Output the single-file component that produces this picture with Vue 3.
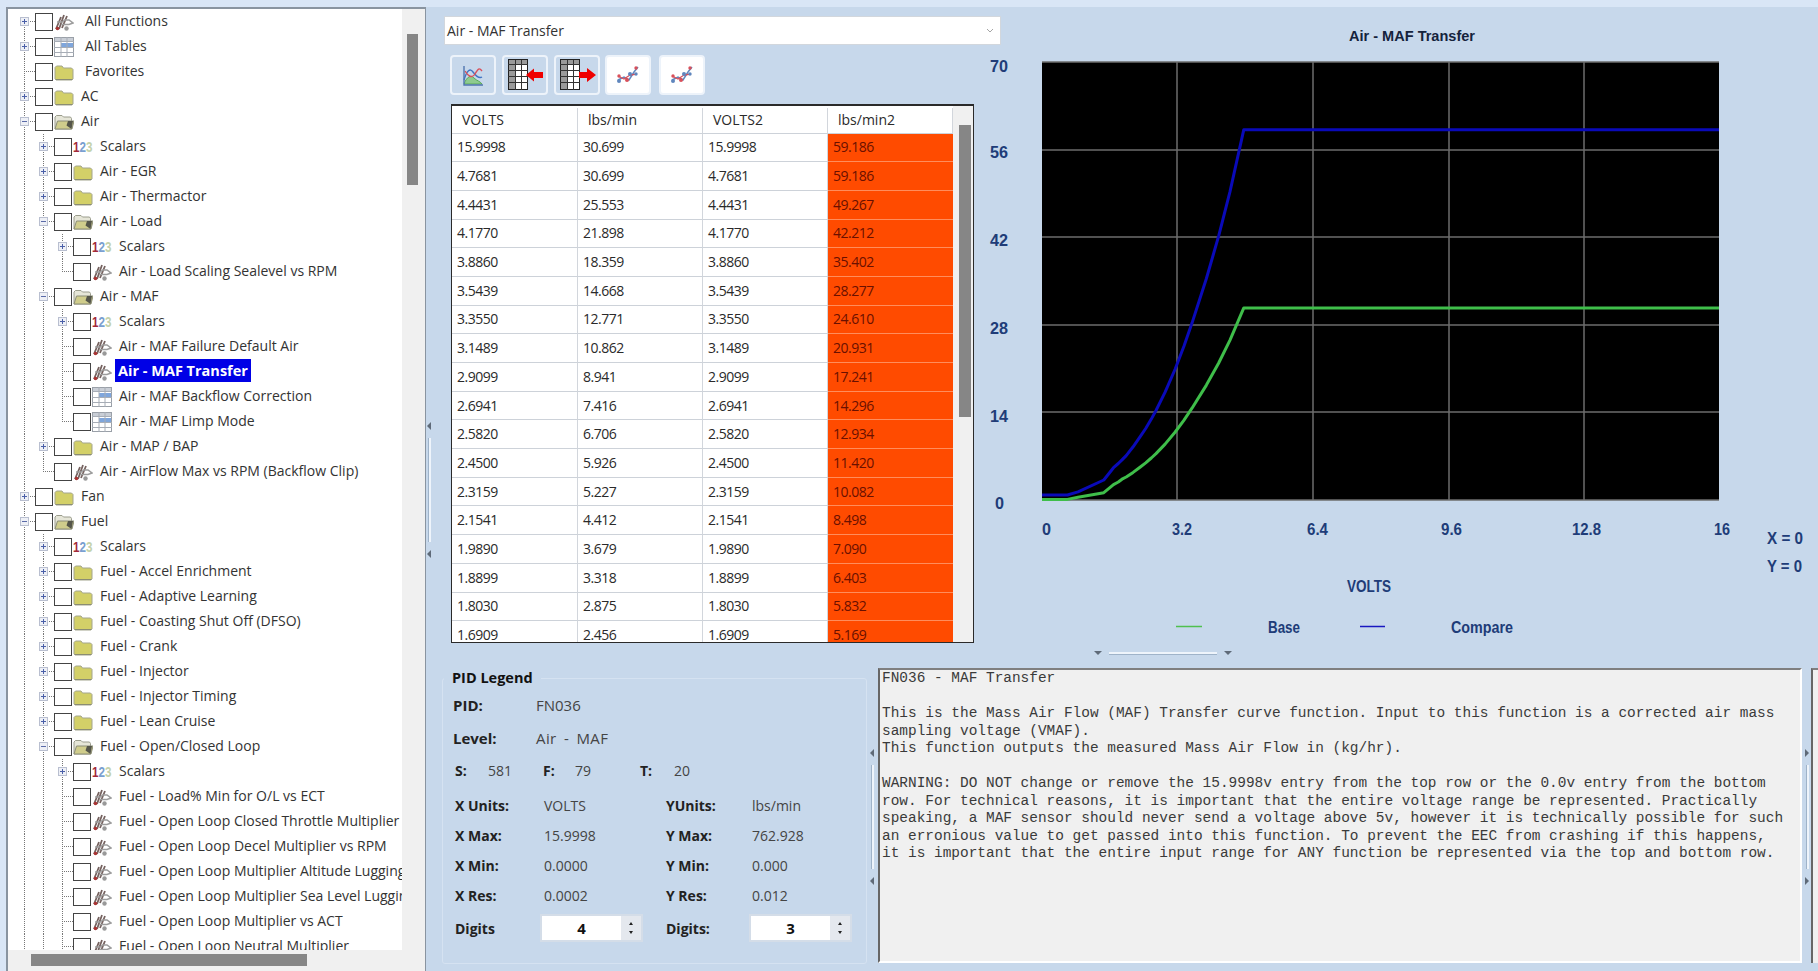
<template>
  <div class="app">
    <aside class="tree">
      <div class="tree-rows">
        <div v-for="row in treeRows" :key="row.id" class="tree-row">
          <span v-for="g in row.guides" :key="g.k" class="guide" :class="{ on: g.on }"></span>
          <span class="exp" :class="{ first: row.id === 0, down: row.down }">
            <span v-if="row.state" class="exp-box" :class="{ plus: row.state === '+' }"></span>
          </span>
          <span class="check"></span>
          <span class="ico">
            <svg v-if="row.icon === 'fn'" width="20" height="20" viewBox="0 0 20 20" fill="none">
              <path d="M2 17 7 5M5 17 10 3M8 16 13 4" stroke="#75625f" stroke-width="1.800" />
              <path d="M3 10h5l3-2h4l4 3-4 1.500H7" stroke="#9d9d9d" stroke-width="1.500" />
              <circle cx="3.500" cy="16.500" r="1.800" fill="#a33" />
              <circle cx="12.500" cy="16.500" r="2.200" fill="#999" />
            </svg>
            <svg v-else-if="row.icon === 'table'" width="20" height="20" viewBox="0 0 20 20">
              <rect x="0.500" y="0.500" width="19" height="19" fill="#fff" stroke="#9aa0a8" />
              <rect x="1" y="1" width="18" height="3" fill="#c9ced6" />
              <rect x="7" y="6" width="12" height="4" fill="#7fa6dc" />
              <path d="M0 4.500h20M0 10.500h20M0 15.500h20M7 0v20M13 0v20" stroke="#a7adb6" fill="none" />
            </svg>
            <svg v-else-if="row.icon === 'folder'" width="20" height="20" viewBox="0 0 20 20">
              <path d="M1 17V5.500L2.500 4H8l1.500 2h8L19 7.500V17l-1 1H2z" fill="#d3d068" stroke="#a3a58e" />
              <path d="M2 17.500h16" stroke="#8b8d74" />
            </svg>
            <svg v-else-if="row.icon === 'open'" width="20" height="20" viewBox="0 0 20 20">
              <path d="M1 17V5l1.500-1.500H8L9.500 5h7l1 1.500V17z" fill="#e6e6d8" stroke="#9a9c8c" />
              <path d="M1 17 3.500 9H20l-2 8z" fill="#d0cd8c" stroke="#8c8e78" />
              <path d="M14 9h5l-1.500 8-5-3.500z" fill="#55564a" />
            </svg>
            <span v-else class="nums"><b class="n1">1</b><b class="n2">2</b><b class="n3">3</b></span>
          </span>
          <span class="tree-label" :class="{ wide: row.id < 3, sel: row.label === 'Air - MAF Transfer' }">{{ row.label }}</span>
        </div>
      </div>
      <div class="tree-vbar"><div class="tree-vthumb"></div></div>
      <div class="tree-hbar"><div class="tree-hthumb"></div></div>
    </aside>

    <main class="main">
      <section class="top">
        <div class="left-col">
          <div class="combo">
            <span>Air - MAF Transfer</span>
            <svg width="8" height="6" viewBox="0 0 8 6"><path d="M1 1l3 3 3-3" fill="none" stroke="#a5a5a5" /></svg>
          </div>
          <div class="toolbar">
            <button class="tool on">
              <svg width="24" height="24" viewBox="0 0 24 24" fill="none">
                <path d="M3 21c3-8 7-9 10-6s6 3 8 6z" fill="#8ecb8e" stroke="#5aa85a" />
                <path d="M3 17c3-10 6-12 9-8s6 7 9 5" stroke="#3f74c4" stroke-width="1.400" />
                <path d="M4 8c3 5 7 8 10 3s4-7 7-3" stroke="#d9505a" stroke-width="1.400" />
                <path d="M3 3v19h19" stroke="#5076b0" stroke-width="1.400" />
              </svg>
            </button>
            <button class="tool on">
              <svg width="40" height="34" viewBox="0 0 40 34">
                <rect x="3.500" y="1.500" width="19" height="30" fill="#fff" stroke="#222" />
                <rect x="4" y="2" width="18" height="4" fill="#9a9a9a" />
                <rect x="4" y="6" width="6" height="25" fill="#9a9a9a" />
                <path d="M3 6.500h20M3 12.500h20M3 18.500h20M3 24.500h20M10.500 2v30M16.500 2v30" stroke="#333" fill="none" />
                <path d="M21 17l8-6.500V14h9v6h-9v3.500z" fill="#ef0000" />
              </svg>
            </button>
            <button class="tool on">
              <svg width="40" height="34" viewBox="0 0 40 34">
                <rect x="3.500" y="1.500" width="19" height="30" fill="#fff" stroke="#222" />
                <rect x="4" y="2" width="18" height="4" fill="#9a9a9a" />
                <rect x="4" y="6" width="6" height="25" fill="#9a9a9a" />
                <path d="M3 6.500h20M3 12.500h20M3 18.500h20M3 24.500h20M10.500 2v30M16.500 2v30" stroke="#333" fill="none" />
                <path d="M39 17l-9-7v4H22v6h8v4z" fill="#ef0000" />
              </svg>
            </button>
            <button v-for="n in 2" :key="n" class="tool">
              <svg width="24" height="20" viewBox="0 0 24 20" fill="none">
                <path d="M2 15l6-3 5 3 5-8 4-5" stroke="#5f86bd" stroke-width="1.500" />
                <path d="M2 11l6 3 6-4 7-1" stroke="#d9505a" stroke-width="1.300" />
                <circle cx="3" cy="16" r="2" fill="#5f86bd" />
                <circle cx="3" cy="11" r="1.700" fill="#d9505a" />
                <circle cx="11" cy="15" r="2" fill="#d9505a" />
                <circle cx="14" cy="9" r="2" fill="#5f86bd" />
                <circle cx="20" cy="9" r="1.700" fill="#5f86bd" />
                <circle cx="20" cy="3" r="1.700" fill="#d9505a" />
              </svg>
            </button>
          </div>
          <div class="grid">
            <div class="cells">
              <div class="grid-row head">
                <span v-for="h in heads" :key="h" class="cell">{{ h }}</span>
              </div>
              <div v-for="r in tableRows" :key="r[0]" class="grid-row">
                <span class="cell">{{ r[0] }}</span>
                <span class="cell">{{ r[1] }}</span>
                <span class="cell">{{ r[0] }}</span>
                <span class="cell hot">{{ r[2] }}</span>
              </div>
            </div>
            <div class="grid-vbar"><div class="grid-vthumb"></div></div>
          </div>
        </div>

        <svg class="chart" width="844" height="660" viewBox="974 8 844 660">
          <text x="1412" y="41" class="title" text-anchor="middle" textLength="126" lengthAdjust="spacingAndGlyphs">Air - MAF Transfer</text>
          <rect x="1042" y="62" width="677" height="438" fill="#000" />
          <path v-for="x in gridX" :key="x" :d="`M${x} 62V500`" class="gl" />
          <path v-for="y in gridY" :key="y" :d="`M1042 ${y}H1719`" class="gl" />
          <path d="M1042 62H1719M1042 500H1719" class="gl" />
          <polyline :points="linePoints(1)" class="line green" />
          <polyline :points="linePoints(2)" class="line blue" />
          <text v-for="t in yTicks" :key="t.s" :x="t.x" :y="t.y" class="ax" :textLength="t.w" lengthAdjust="spacingAndGlyphs">{{ t.s }}</text>
          <text v-for="t in xTicks" :key="t.s" :x="t.x" y="535" class="ax" :textLength="t.w" lengthAdjust="spacingAndGlyphs">{{ t.s }}</text>
          <text x="1347" y="592" class="ax" textLength="44" lengthAdjust="spacingAndGlyphs">VOLTS</text>
          <path d="M1176 626.500h26" stroke="#4fc04f" stroke-width="1.500" />
          <text x="1268" y="633" class="ax lg" textLength="32" lengthAdjust="spacingAndGlyphs">Base</text>
          <path d="M1360 626.500h25" stroke="#1818c0" stroke-width="1.500" />
          <text x="1451" y="633" class="ax lg" textLength="62" lengthAdjust="spacingAndGlyphs">Compare</text>
          <text x="1767" y="544" class="ax" textLength="36" lengthAdjust="spacingAndGlyphs">X = 0</text>
          <text x="1767" y="572" class="ax" textLength="35" lengthAdjust="spacingAndGlyphs">Y = 0</text>
        </svg>
      </section>

      <section class="bottom">
        <fieldset class="legend-box">
          <legend>PID Legend</legend>
          <div class="lg-grid">
            <div class="lg-row big">
              <b class="w81">PID:</b><span>FN036</span>
            </div>
            <div class="lg-row big">
              <b class="w81">Level:</b><span class="spaced">Air - MAF</span>
            </div>
            <div class="lg-row">
              <b class="w33">S:</b><span class="w55">581</span>
              <b class="w32">F:</b><span class="w65">79</span>
              <b class="w34">T:</b><span>20</span>
            </div>
            <div v-for="p in pairs" :key="p[0]" class="lg-row">
              <b class="w89">{{ p[0] }}</b><span class="w122">{{ p[1] }}</span>
              <b class="w86">{{ p[2] }}</b><span>{{ p[3] }}</span>
            </div>
            <div class="lg-row">
              <b class="w85">Digits</b>
              <div class="spin gap"><div class="spin-val">4</div><div class="spin-btns"><i class="up"></i><i class="dn"></i></div></div>
              <b class="w83">Digits:</b>
              <div class="spin"><div class="spin-val">3</div><div class="spin-btns"><i class="up"></i><i class="dn"></i></div></div>
            </div>
          </div>
        </fieldset>
        <pre class="desc">{{ description }}</pre>
        <div class="desc-next"></div>
      </section>
    </main>

    <div class="grip grip-a"><i class="arr"></i><i class="bar"></i><i class="arr"></i></div>
    <div class="grip grip-b"><i class="arr"></i><i class="bar"></i><i class="arr"></i></div>
    <div class="grip grip-c"><i class="arr r"></i><i class="bar"></i><i class="arr r"></i></div>
    <div class="hgrip"><i class="arr"></i><i class="bar"></i><i class="arr"></i></div>
  </div>
</template>

<script setup>
const raw = [
  [0, 'fn', 'All Functions', '+'],
  [0, 'table', 'All Tables', '+'],
  [0, 'folder', 'Favorites', ''],
  [0, 'folder', 'AC', '+'],
  [0, 'open', 'Air', '-'],
  [1, 'num', 'Scalars', '+'],
  [1, 'folder', 'Air - EGR', '+'],
  [1, 'folder', 'Air - Thermactor', '+'],
  [1, 'open', 'Air - Load', '-'],
  [2, 'num', 'Scalars', '+'],
  [2, 'fn', 'Air - Load Scaling Sealevel vs RPM', ''],
  [1, 'open', 'Air - MAF', '-'],
  [2, 'num', 'Scalars', '+'],
  [2, 'fn', 'Air - MAF Failure Default Air', ''],
  [2, 'fn', 'Air - MAF Transfer', ''],
  [2, 'table', 'Air - MAF Backflow Correction', ''],
  [2, 'table', 'Air - MAF Limp Mode', ''],
  [1, 'folder', 'Air - MAP / BAP', '+'],
  [1, 'fn', 'Air - AirFlow Max vs RPM (Backflow Clip)', ''],
  [0, 'folder', 'Fan', '+'],
  [0, 'open', 'Fuel', '-'],
  [1, 'num', 'Scalars', '+'],
  [1, 'folder', 'Fuel - Accel Enrichment', '+'],
  [1, 'folder', 'Fuel - Adaptive Learning', '+'],
  [1, 'folder', 'Fuel - Coasting Shut Off (DFSO)', '+'],
  [1, 'folder', 'Fuel - Crank', '+'],
  [1, 'folder', 'Fuel - Injector', '+'],
  [1, 'folder', 'Fuel - Injector Timing', '+'],
  [1, 'folder', 'Fuel - Lean Cruise', '+'],
  [1, 'open', 'Fuel - Open/Closed Loop', '-'],
  [2, 'num', 'Scalars', '+'],
  [2, 'fn', 'Fuel - Load% Min for O/L vs ECT', ''],
  [2, 'fn', 'Fuel - Open Loop Closed Throttle Multiplier', ''],
  [2, 'fn', 'Fuel - Open Loop Decel Multiplier vs RPM', ''],
  [2, 'fn', 'Fuel - Open Loop Multiplier Altitude Lugging', ''],
  [2, 'fn', 'Fuel - Open Loop Multiplier Sea Level Lugging', ''],
  [2, 'fn', 'Fuel - Open Loop Multiplier vs ACT', ''],
  [2, 'fn', 'Fuel - Open Loop Neutral Multiplier', ''],
]

// the list runs past the clipped edge, so falling off the end counts as "continues"
function continues(i, lvl) {
  for (let j = i + 1; j < raw.length; j++) {
    if (raw[j][0] < lvl) return false
    if (raw[j][0] === lvl) return true
  }
  return true
}

const treeRows = raw.map((r, i) => ({
  id: i,
  icon: r[1],
  label: r[2],
  state: r[3],
  down: continues(i, r[0]),
  guides: Array.from({ length: r[0] }, (_, k) => ({ k, on: continues(i, k) })),
}))

const heads = ['VOLTS', 'lbs/min', 'VOLTS2', 'lbs/min2']
const tableRows = [
  ['15.9998', '30.699', '59.186'],
  ['4.7681', '30.699', '59.186'],
  ['4.4431', '25.553', '49.267'],
  ['4.1770', '21.898', '42.212'],
  ['3.8860', '18.359', '35.402'],
  ['3.5439', '14.668', '28.277'],
  ['3.3550', '12.771', '24.610'],
  ['3.1489', '10.862', '20.931'],
  ['2.9099', '8.941', '17.241'],
  ['2.6941', '7.416', '14.296'],
  ['2.5820', '6.706', '12.934'],
  ['2.4500', '5.926', '11.420'],
  ['2.3159', '5.227', '10.082'],
  ['2.1541', '4.412', '8.498'],
  ['1.9890', '3.679', '7.090'],
  ['1.8899', '3.318', '6.403'],
  ['1.8030', '2.875', '5.832'],
  ['1.6909', '2.456', '5.169'],
]
// rows below the visible part of the grid, read off the curve
const lowEnd = [
  [1.46, 1.17, 3.2],
  [0.85, 0.43, 1.3],
  [0.6, 0.1, 0.8],
  [0, 0.1, 0.8],
]

function linePoints(col) {
  return tableRows
    .map((r) => r.map(Number))
    .concat(lowEnd)
    .map((r) => `${(1042 + (r[0] / 16) * 677).toFixed(1)},${(500 - (r[col] / 70) * 438).toFixed(1)}`)
    .join(' ')
}

const gridX = [1177, 1313, 1449, 1584]
const gridY = [150, 237, 325, 412]
const yTicks = [
  { s: '70', x: 990, y: 72, w: 18 },
  { s: '56', x: 990, y: 158, w: 18 },
  { s: '42', x: 990, y: 246, w: 18 },
  { s: '28', x: 990, y: 334, w: 18 },
  { s: '14', x: 990, y: 422, w: 18 },
  { s: '0', x: 995, y: 509, w: 9 },
]
const xTicks = [
  { s: '0', x: 1042, w: 9 },
  { s: '3.2', x: 1172, w: 20 },
  { s: '6.4', x: 1307, w: 21 },
  { s: '9.6', x: 1441, w: 21 },
  { s: '12.8', x: 1572, w: 29 },
  { s: '16', x: 1714, w: 16 },
]

const pairs = [
  ['X Units:', 'VOLTS', 'YUnits:', 'lbs/min'],
  ['X Max:', '15.9998', 'Y Max:', '762.928'],
  ['X Min:', '0.0000', 'Y Min:', '0.000'],
  ['X Res:', '0.0002', 'Y Res:', '0.012'],
]

const description = `FN036 - MAF Transfer

This is the Mass Air Flow (MAF) Transfer curve function. Input to this function is a corrected air mass
sampling voltage (VMAF).
This function outputs the measured Mass Air Flow in (kg/hr).

WARNING: DO NOT change or remove the 15.9998v entry from the top row or the 0.0v entry from the bottom
row. For technical reasons, it is important that the entire voltage range be represented. Practically
speaking, a MAF sensor should never send a voltage above 5v, however it is technically possible for such
an erronious value to get passed into this function. To prevent the EEC from crashing if this happens,
it is important that the entire input range for ANY function be represented via the top and bottom row.`
</script>

<style>
html,
body {
  margin: 0;
  overflow: hidden;
  background: #d9e6f6;
}
</style>

<style scoped>
.app {
  position: relative;
  display: flex;
  width: 1818px;
  height: 971px;
  overflow: hidden;
  padding: 7px 0 0 6px;
  box-sizing: border-box;
  font-family: "Open Sans", "Liberation Sans", sans-serif;
  font-size: 14px;
  color: #333;
  background: #d9e6f6;
}

/* tree */
.tree {
  flex: 0 0 420px;
  display: grid;
  grid-template-columns: 394px 23px;
  grid-template-rows: 941px 21px;
  border: 2px solid #8994a0;
  border-right-width: 1px;
  border-bottom: 0;
  box-sizing: border-box;
  background: #f0f0f0;
}
.tree-rows {
  background: #fff;
  overflow: hidden;
  padding-left: 7px;
}
.tree-row {
  display: flex;
  align-items: center;
  height: 25px;
  white-space: nowrap;
}
.guide {
  flex: 0 0 19px;
  height: 25px;
}
.guide.on {
  background: repeating-linear-gradient(#777 0 1px, transparent 1px 2px) 9px 0 / 1px 100% no-repeat;
}
.exp {
  flex: 0 0 20px;
  height: 25px;
  display: flex;
  align-items: center;
  background:
    repeating-linear-gradient(#777 0 1px, transparent 1px 2px) 9px 0 / 1px 13px no-repeat,
    repeating-linear-gradient(90deg, #777 0 1px, transparent 1px 2px) 9px 12px / 11px 1px no-repeat;
}
.exp.down {
  background:
    repeating-linear-gradient(#777 0 1px, transparent 1px 2px) 9px 0 / 1px 100% no-repeat,
    repeating-linear-gradient(90deg, #777 0 1px, transparent 1px 2px) 9px 12px / 11px 1px no-repeat;
}
.exp.first.down {
  background:
    repeating-linear-gradient(#777 0 1px, transparent 1px 2px) 9px 12px / 1px 13px no-repeat,
    repeating-linear-gradient(90deg, #777 0 1px, transparent 1px 2px) 9px 12px / 11px 1px no-repeat;
}
.exp-box {
  width: 9px;
  height: 9px;
  margin-left: 5px;
  box-sizing: border-box;
  border: 1px solid #b9bfd0;
  background:
    linear-gradient(#5a6aa8, #5a6aa8) center / 5px 1px no-repeat,
    #eef0f6;
}
.exp-box.plus {
  background:
    linear-gradient(#4a5fa8, #4a5fa8) center / 5px 1px no-repeat,
    linear-gradient(#4a5fa8, #4a5fa8) center / 1px 5px no-repeat,
    #eef0f6;
}
.check {
  flex: 0 0 18px;
  height: 18px;
  box-sizing: border-box;
  border: 1.500px solid #444;
  background: #fff;
}
.ico {
  flex: 0 0 20px;
  width: 20px;
  min-width: 0;
  height: 20px;
  margin-left: 1px;
  display: flex;
  align-items: center;
}
.nums {
  display: inline-block;
  flex: none;
  font-family: "Liberation Sans", sans-serif;
  font-size: 15.500px;
  transform: scaleX(0.75);
  transform-origin: left center;
}
.n1 {
  color: #a32a3a;
}
.n2 {
  color: #7a9fd0;
}
.n3 {
  color: #c4d2ac;
}
.tree-label {
  margin: -2px 0 0 5px;
  padding: 2px;
  line-height: 19px;
}
.tree-label.wide {
  margin-left: 9px;
}
.tree-label.sel {
  margin-left: 3px;
  padding: 2px 3px;
  background: #0000e6;
  color: #fff;
  font-size: 14.500px;
  font-weight: 700;
}
.tree-vbar {
  padding: 25px 0 0 5px;
}
.tree-vthumb {
  width: 11px;
  height: 151px;
  background: #868686;
}
.tree-hbar {
  grid-column: 1 / 3;
  padding: 4px 0 0 23px;
}
.tree-hthumb {
  width: 276px;
  height: 12px;
  background: #868686;
}

/* main area */
.main {
  flex: 1;
  background: #c7d8eb;
  min-width: 0;
}
.top {
  display: flex;
  height: 661px;
}
.left-col {
  flex: 0 0 548px;
  min-width: 0;
  box-sizing: border-box;
  padding: 9px 0 0 18px;
}
.combo {
  display: flex;
  align-items: center;
  justify-content: space-between;
  width: 557px;
  height: 29px;
  box-sizing: border-box;
  padding: 0 6px 0 2px;
  background: #fff;
  border: 1px solid #d2d7dd;
}
.toolbar {
  display: flex;
  gap: 6px;
  margin: 10px 0 9px 6px;
}
.tool {
  width: 46px;
  height: 40px;
  padding: 0;
  box-sizing: border-box;
  display: flex;
  align-items: center;
  justify-content: center;
  background: #fff;
  border: 2px solid #edf3fa;
  border-radius: 4px;
}
.tool.on {
  background: #c7d8eb;
}
.tool:nth-child(4) {
  margin-right: 2px;
}
.tool:nth-child(3) {
  margin-right: -1px;
}
.grid {
  display: flex;
  width: 523px;
  height: 539px;
  margin-left: 7px;
  box-sizing: border-box;
  border: 1px solid #2a2a2a;
  border-top-width: 2px;
  overflow: hidden;
  background: #f0f0f0;
}
.cells {
  flex: 0 0 501px;
  padding-top: 2px;
  background: #fff;
}
.grid-row {
  display: grid;
  grid-template-columns: 126px 125px 125px 125px;
  height: 28.700px;
}
.grid-row.head {
  height: 25.500px;
}
.cell {
  box-sizing: border-box;
  padding-left: 5px;
  display: flex;
  align-items: center;
  border-right: 1.500px solid #d2d6dc;
  border-bottom: 1.500px solid #cdd2d9;
  line-height: 1;
  letter-spacing: -0.500px;
  color: #2a2a2a;
}
.head .cell {
  padding-left: 10px;
  border-bottom-width: 1px;
  letter-spacing: 0;
}
.cell.hot {
  background: #ff4b00;
  color: #6a1000;
  border-bottom-color: #ff8d5c;
  border-right: 0;
}
.grid-vbar {
  flex: 1;
  padding: 19px 0 0 6px;
}
.grid-vthumb {
  width: 12px;
  height: 292px;
  background: #868686;
}

/* chart */
.chart {
  flex: 0 0 auto;
  margin-top: 1px;
  overflow: hidden;
}
.title {
  font-family: "Liberation Sans", sans-serif;
  font-size: 15px;
  font-weight: 700;
  fill: #15233c;
}
.gl {
  stroke: #6d6d6d;
  stroke-width: 1.500;
  fill: none;
}
.line {
  fill: none;
  stroke-width: 3;
  stroke-linejoin: round;
}
.green {
  stroke: #3fbe4a;
}
.blue {
  stroke: #0a0ab8;
}
.ax {
  font-family: "Liberation Sans", sans-serif;
  font-size: 16px;
  font-weight: 700;
  fill: #203c78;
}
.ax.lg {
  font-size: 17px;
}

/* bottom row */
.bottom {
  display: flex;
  height: 303px;
  padding-left: 16px;
}
.legend-box {
  flex: 0 0 425px;
  width: 425px;
  min-width: 0;
  height: 296px;
  box-sizing: border-box;
  margin: 0;
  padding: 0 0 0 12px;
  border: 1px solid #d5e2f1;
  border-radius: 3px;
}
.legend-box legend {
  padding: 0 8px;
  margin-left: -11px;
  font-weight: 700;
  font-size: 14.500px;
  line-height: 20px;
  color: #111;
}
.lg-grid {
  display: grid;
  grid-template-rows: 33px 33px 32px 34px 30px 30px 30px 36px;
}
.lg-row {
  display: flex;
  align-items: center;
  color: #444;
}
.lg-row:nth-child(4) {
  padding-top: 4px;
}
.lg-row b {
  color: #222;
  font-weight: 700;
}
.lg-row.big {
  margin-left: -2px;
  font-size: 15px;
}
.spaced {
  word-spacing: 3px;
  letter-spacing: 0.400px;
}
.w33 { flex: 0 0 33px; }
.w55 { flex: 0 0 55px; }
.w32 { flex: 0 0 32px; }
.w65 { flex: 0 0 65px; }
.w34 { flex: 0 0 34px; }
.w81 { flex: 0 0 83px; }
.w83 { flex: 0 0 83px; }
.w85 { flex: 0 0 85px; }
.w86 { flex: 0 0 86px; }
.w89 { flex: 0 0 89px; }
.w122 { flex: 0 0 122px; }
.spin {
  flex: 0 0 103px;
  height: 28px;
  display: flex;
  box-sizing: border-box;
  border: 2px solid #d4dde8;
  background: #fff;
}
.spin.gap {
  margin-right: 23px;
}
.spin-val {
  flex: 1;
  text-align: center;
  font-weight: 700;
  font-size: 15px;
  line-height: 24px;
  color: #111;
}
.spin-btns {
  flex: 0 0 20px;
  display: flex;
  flex-direction: column;
  align-items: center;
  justify-content: space-around;
  padding: 3px 0;
  box-sizing: border-box;
  background: #e4e8ee;
}
.spin-btns i {
  width: 0;
  height: 0;
  border-left: 2.500px solid transparent;
  border-right: 2.500px solid transparent;
}
.spin-btns .up {
  border-bottom: 3px solid #222;
}
.spin-btns .dn {
  border-top: 3px solid #222;
}
.desc {
  flex: 0 0 924px;
  height: 295px;
  box-sizing: border-box;
  margin: 0 0 0 11px;
  padding: 0 0 0 2px;
  background: #f0f0f0;
  border-top: 2px solid #7f7f7f;
  border-left: 2px solid #666;
  border-right: 2px solid #fff;
  border-bottom: 2px solid #fff;
  font-family: "Liberation Mono", monospace;
  font-size: 14.440px;
  line-height: 17.500px;
  color: #3a3a3a;
  white-space: pre;
  overflow: hidden;
}
.desc-next {
  flex: 0 0 8px;
  height: 295px;
  margin-left: 9px;
  box-sizing: border-box;
  background: #f0f0f0;
  border-top: 2px solid #7f7f7f;
  border-left: 2px solid #666;
}

/* splitter grips */
.grip {
  position: absolute;
  display: flex;
  flex-direction: column;
  align-items: center;
  width: 6px;
  height: 144px;
}
.grip-a {
  left: 426px;
  top: 418px;
}
.grip-b {
  left: 869px;
  top: 745px;
}
.grip-c {
  left: 1804px;
  top: 745px;
}
.grip .bar {
  flex: 1;
  width: 2px;
  margin: 4px 0;
  background: #eef4fb;
  border-left: 1px solid #9fb3c9;
}
.grip .arr {
  width: 0;
  height: 0;
  margin: 4px 0;
  border-top: 4px solid transparent;
  border-bottom: 4px solid transparent;
  border-right: 4px solid #5f6a78;
}
.grip .arr.r {
  border-right: 0;
  border-left: 4px solid #5f6a78;
}
.hgrip {
  position: absolute;
  left: 1091px;
  top: 650px;
  width: 144px;
  height: 6px;
  display: flex;
  align-items: center;
}
.hgrip .bar {
  flex: 1;
  height: 2px;
  margin: 0 4px;
  background: #eef4fb;
  border-bottom: 1px solid #9fb3c9;
}
.hgrip .arr {
  width: 0;
  height: 0;
  margin: 0 3px;
  border-left: 4px solid transparent;
  border-right: 4px solid transparent;
  border-top: 4px solid #5f6a78;
}
</style>
